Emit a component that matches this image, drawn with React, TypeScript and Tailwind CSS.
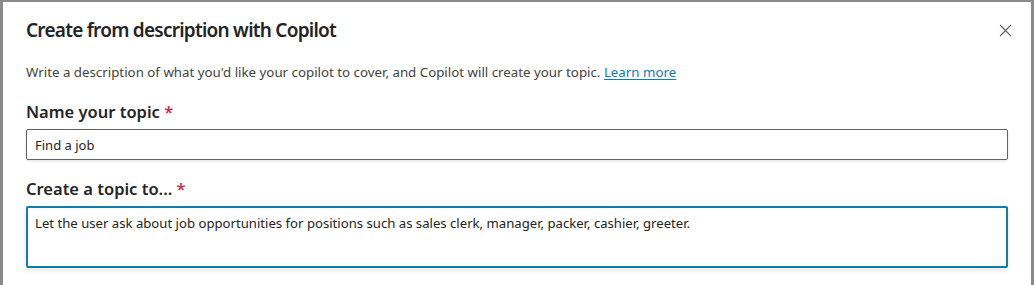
import React, { useState } from 'react';

const font = { fontFamily: '"Segoe UI", "Noto Sans", "Open Sans", sans-serif' };

const App: React.FC = () => {
  const [name, setName] = useState('Find a job');
  const [desc, setDesc] = useState(
    'Let the user ask about job opportunities for positions such as sales clerk, manager, packer, cashier, greeter.'
  );

  return (
    <div className="w-[1034px] h-[285px] bg-[#8a8a8a] pt-[2px] pl-[3px] pr-[3px] overflow-hidden" style={font}>
      <div className="h-full bg-white pl-[23px] pr-[24px] flex flex-col">
        {/* Header */}
        <div className="flex items-center justify-between h-[55px] pt-[1px]">
          <h2 className="text-[19px] font-semibold tracking-[-0.75px] text-[#242424] leading-none">
            Create from description with Copilot
          </h2>
          <button className="w-[20px] h-[20px] flex items-center justify-center text-[#616161] mr-[-8px]">
            <svg width="13" height="13" viewBox="0 0 13 13" fill="none" stroke="currentColor" strokeWidth="1.1">
              <path d="M1 1L12 12M12 1L1 12" />
            </svg>
          </button>
        </div>

        <p className="text-[13.3px] text-[#424242] leading-[18px] mt-[6px]">
          Write a description of what you'd like your copilot to cover, and Copilot will create your topic.{' '}
          <a href="#" className="text-[#0f7cb8] underline underline-offset-2">Learn more</a>
        </p>

        {/* Name */}
        <label className="mt-[20px] text-[16.5px] font-semibold text-[#242424] leading-[22px]">
          Name your topic <span className="text-[#c4314b]">*</span>
        </label>
        <input
          value={name}
          onChange={(e) => setName(e.target.value)}
          className="mt-[6px] h-[31px] w-[982px] border border-[#616161] rounded-[2px] px-[8px] text-[13px] text-[#242424] outline-none shadow-[0_1px_3px_rgba(0,0,0,0.12)]"
        />

        {/* Description */}
        <label className="mt-[18px] text-[16.5px] font-semibold text-[#242424] leading-[22px]">
          Create a topic to... <span className="text-[#c4314b]">*</span>
        </label>
        <textarea
          value={desc}
          onChange={(e) => setDesc(e.target.value)}
          className="mt-[6px] h-[62px] w-[982px] border-2 border-[#0f7ea8] rounded-[2px] px-[7px] pt-[6px] text-[13.15px] leading-[18px] text-[#242424] outline-none resize-none shadow-[0_2px_6px_rgba(0,0,0,0.1)]"
        />
      </div>
    </div>
  );
};

export default App;
